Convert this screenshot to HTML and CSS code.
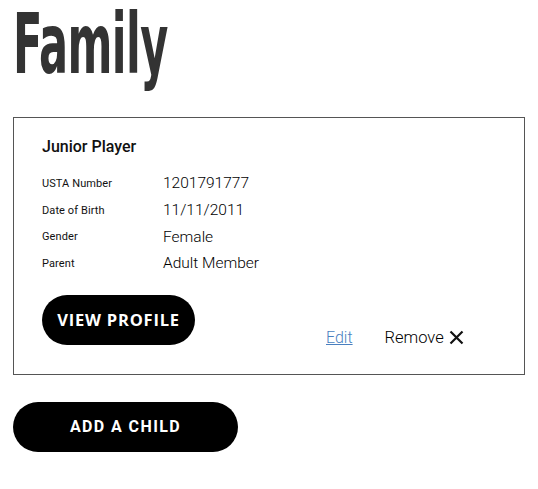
FILE: index.html
```html
<!DOCTYPE html>
<html lang="en">
<head>
    <meta charset="UTF-8">
    <meta name="viewport" content="width=device-width, initial-scale=1.0">
    <title>Family</title>
    <link rel="stylesheet" href="styles.css">
</head>
<body>
    <div class="page">
        <div class="page-head">
            <h1 class="page-title">Family</h1>
        </div>
        <div class="member-card">
            <h2 class="member-name">Junior Player</h2>
            <div class="member-info">
                <div class="info-row">
                    <span class="info-label">USTA Number</span>
                    <span class="info-value">1201791777</span>
                </div>
                <div class="info-row">
                    <span class="info-label">Date of Birth</span>
                    <span class="info-value">11/11/2011</span>
                </div>
                <div class="info-row">
                    <span class="info-label">Gender</span>
                    <span class="info-value">Female</span>
                </div>
                <div class="info-row">
                    <span class="info-label">Parent</span>
                    <span class="info-value">Adult Member</span>
                </div>
            </div>
            <div class="card-footer">
                <button type="button" class="btn btn-profile">VIEW PROFILE</button>
                <div class="card-actions">
                    <a href="#" class="edit-link">Edit</a>
                    <button type="button" class="remove-link">
                        Remove
                        <svg width="15" height="15" viewBox="0 0 15 15">
                            <path d="M1.5 1.5 L13.5 13.5 M13.5 1.5 L1.5 13.5" stroke="#111" stroke-width="2.2" fill="none"/>
                        </svg>
                    </button>
                </div>
            </div>
        </div>
        <button type="button" class="btn btn-add">ADD A CHILD</button>
    </div>
</body>
</html>
```

FILE: styles.css
```css
body {
    margin: 0;
    font-family: Roboto, 'Liberation Sans', sans-serif;
    color: #111;
    background-color: #ffffff;
}
.page {
    padding: 0 13px;
}
.page-head {
    height: 94px;
    margin-bottom: 23px;
}
.page-title {
    display: inline-block;
    font-family: 'DejaVu Sans Condensed', 'DejaVu Sans', sans-serif;
    font-weight: bold;
    font-size: 84px;
    line-height: 100px;
    color: #333;
    margin: -6px 0 0 0;
    transform: scaleX(0.57);
    transform-origin: left top;
    letter-spacing: -1px;
}
.member-card {
    border: 1px solid #555;
    padding: 18px 28px 29px 28px;
}
.member-name {
    font-size: 16px;
    font-weight: 500;
    margin: 0 0 12px 0;
    line-height: 22px;
}
.member-info {
    margin-bottom: 18px;
}
.info-row {
    display: flex;
    align-items: center;
    height: 26.7px;
}
.info-label {
    width: 121px;
    font-size: 11px;
    font-weight: 400;
    letter-spacing: 0.1px;
}
.info-value {
    font-size: 15.5px;
    font-weight: 300;
    color: #000;
}
.card-footer {
    display: flex;
    align-items: flex-end;
}
.btn {
    background-color: #000;
    color: #fff;
    border: none;
    border-radius: 25px;
    height: 50px;
    cursor: pointer;
    font-weight: bold;
}
.btn-profile {
    width: 153px;
    font-family: 'Open Sans', sans-serif;
    font-size: 16.5px;
    letter-spacing: 0.8px;
}
.btn-add {
    display: block;
    width: 225px;
    margin-top: 27px;
    font-family: Roboto, sans-serif;
    font-size: 16px;
    letter-spacing: 1.4px;
}
.card-actions {
    display: flex;
    align-items: center;
    height: 20px;
    margin: 0 0 -3px 131px;
}
.edit-link {
    color: #4a7fbf;
    font-size: 16px;
    font-weight: 300;
    margin-right: 32px;
}
.remove-link {
    display: flex;
    align-items: center;
    gap: 5px;
    background: none;
    border: none;
    padding: 0;
    font-family: Roboto, sans-serif;
    font-size: 16.5px;
    font-weight: 300;
    color: #000;
    cursor: pointer;
}
```
